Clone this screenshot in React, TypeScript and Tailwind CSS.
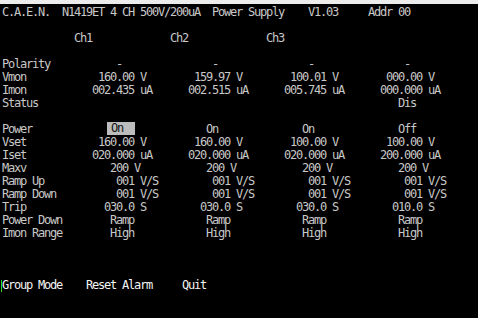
import React from "react";

type Cell = [number, string];

// lay strings out on an 80 column character grid
function line(cells: Cell[]) {
  let s = "";
  for (const [col, text] of cells) {
    s = s.padEnd(col, " ") + text;
  }
  return s;
}

const rows: string[] = [
  line([[0, "C.A.E.N.  N1419ET 4 CH 500V/200uA  Power Supply    V1.03     Addr 00"]]),
  "",
  line([[12, "Ch1"], [28, "Ch2"], [44, "Ch3"]]),
  "",
  line([[0, "Polarity"], [19, "-"], [35, "-"], [51, "-"], [67, "-"]]),
  line([[0, "Vmon"], [16, "160.00 V"], [32, "159.97 V"], [48, "100.01 V"], [64, "000.00 V"]]),
  line([[0, "Imon"], [15, "002.435 uA"], [31, "002.515 uA"], [47, "005.745 uA"], [63, "000.000 uA"]]),
  line([[0, "Status"], [66, "Dis"]]),
  "",
];

const rowsAfter: string[] = [
  line([[0, "Vset"], [16, "160.00 V"], [32, "160.00 V"], [48, "100.00 V"], [64, "100.00 V"]]),
  line([[0, "Iset"], [15, "020.000 uA"], [31, "020.000 uA"], [47, "020.000 uA"], [63, "200.000 uA"]]),
  line([[0, "Maxv"], [18, "200 V"], [34, "200 V"], [50, "200 V"], [66, "200 V"]]),
  line([[0, "Ramp Up"], [19, "001 V/S"], [35, "001 V/S"], [51, "001 V/S"], [67, "001 V/S"]]),
  line([[0, "Ramp Down"], [19, "001 V/S"], [35, "001 V/S"], [51, "001 V/S"], [67, "001 V/S"]]),
  line([[0, "Trip"], [17, "030.0 S"], [33, "030.0 S"], [49, "030.0 S"], [65, "010.0 S"]]),
  line([[0, "Power Down"], [18, "Ramp"], [34, "Ramp"], [50, "Ramp"], [66, "Ramp"]]),
  line([[0, "Imon Range"], [18, "High"], [34, "High"], [50, "High"], [66, "High"]]),
  "",
  "",
  "",
];

export default function App() {
  return (
    <div className="min-h-screen w-full bg-black overflow-hidden">
      {/* window title strip */}
      <div className="h-[4px] w-full bg-[#ececec]" />
      <div
        className="pt-[2px] pl-[2px] text-[#c8c8c8] text-[12px] leading-[13px] tracking-[-1.224px] whitespace-pre"
        style={{ fontFamily: '"DejaVu Sans Mono", "Liberation Mono", monospace' }}
      >
        {rows.map((r, i) => (
          <div key={i} className="h-[13px]">{r}</div>
        ))}
        <div className="h-[13px]">
          {"Power            "}
          <span className="relative top-[-1px] inline-block h-[13px] w-[28px] ml-[3px] mr-[-1px] pl-[4px] bg-[#bcbcbc] text-[#111111] align-top">
            On
          </span>
          {line([[12, "On"], [28, "On"], [44, "Off"]])}
        </div>
        {rowsAfter.map((r, i) => (
          <div key={i} className="h-[13px]">{r}</div>
        ))}
        <div className="relative h-[13px] text-[#f4f4f4]">
          <span className="absolute left-[-1px] top-[1px] h-[12px] w-[1px] bg-[#22dd22]" />
          {line([[0, "Group Mode"], [14, "Reset Alarm"], [30, "Quit"]])}
        </div>
      </div>
    </div>
  );
}
